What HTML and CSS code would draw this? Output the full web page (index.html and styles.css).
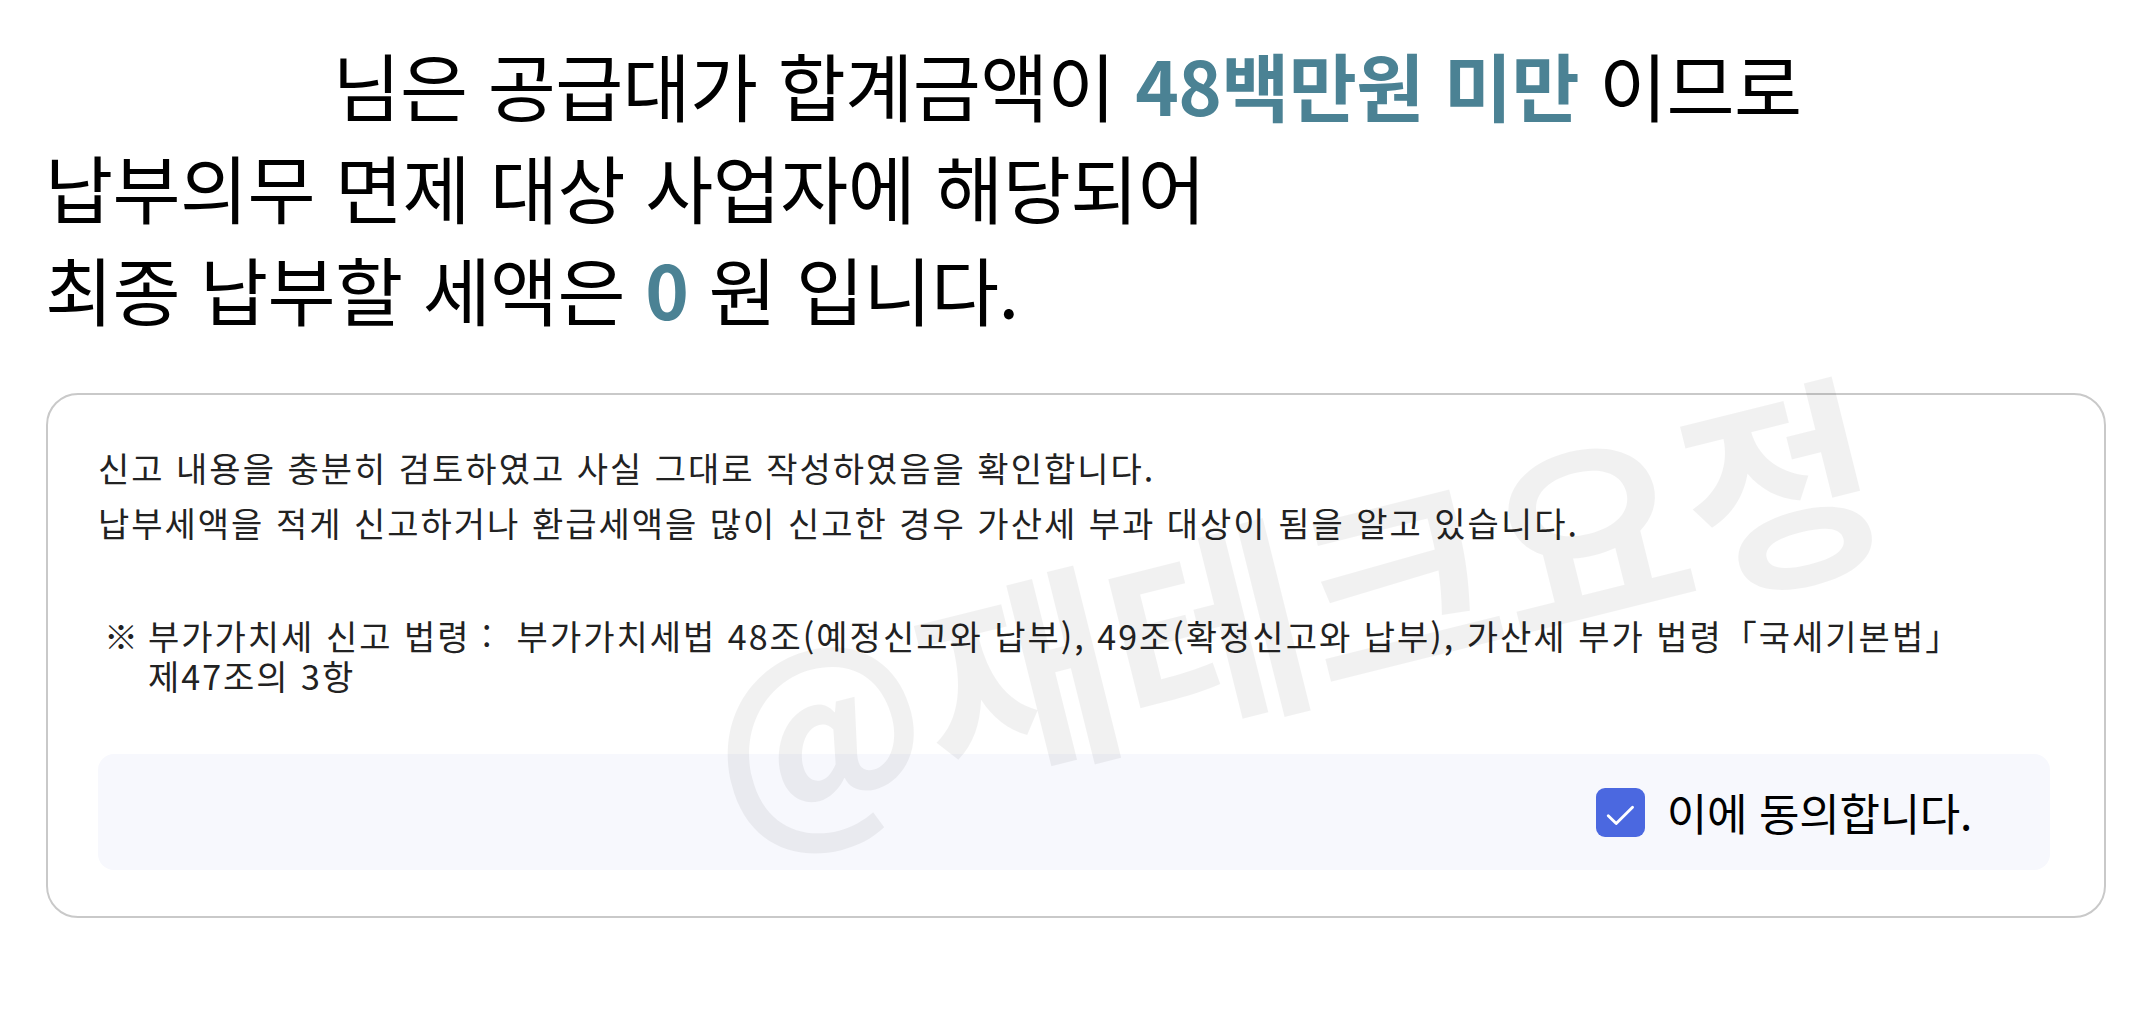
FILE: index.html
```html
<!DOCTYPE html>
<html lang="ko">
<head>
<meta charset="utf-8">
<title>신고 확인</title>
<link rel="stylesheet" href="styles.css">
</head>
<body>
<div class="page">
  <div class="headline">
    <div class="line line-center">님은 공급대가 합계금액이 <b class="hl">48백만원 미만</b> 이므로</div>
    <div class="line">납부의무 면제 대상 사업자에 해당되어</div>
    <div class="line">최종 납부할 세액은 <b class="hl">0</b> 원 입니다.</div>
  </div>

  <div class="card">
    <p class="stmt">신고 내용을 충분히 검토하였고 사실 그대로 작성하였음을 확인합니다.</p>
    <p class="stmt">납부세액을 적게 신고하거나 환급세액을 많이 신고한 경우 가산세 부과 대상이 됨을 알고 있습니다.</p>
    <div class="note">
      <span class="note-mark">※</span>
      <span class="note-text">부가가치세 신고 법령 :&nbsp; 부가가치세법 48조(예정신고와 납부), 49조(확정신고와 납부), 가산세 부가 법령「국세기본법」 제47조의 3항</span>
    </div>
    <div class="agree">
      <span class="checkbox">
        <svg viewBox="0 0 24 24" width="49" height="49" aria-hidden="true"><path d="M6 13.6 L9.9 17.4 L17.9 9.4" fill="none" stroke="#fff" stroke-width="1.4" stroke-linecap="round" stroke-linejoin="round"/></svg>
      </span>
      <span class="agree-text">이에 동의합니다.</span>
    </div>
  </div>

  <div class="watermark">@재테크요정</div>
</div>
</body>
</html>
```

FILE: styles.css
```css
html, body {
  margin: 0;
  padding: 0;
  background: #ffffff;
}

body {
  font-family: "Noto Sans CJK KR", "Noto Sans", sans-serif;
  color: #000;
}

.page {
  position: relative;
  width: 2134px;
  height: 1019px;
  overflow: hidden;
}

.headline {
  padding-top: 33px;
  font-size: 74px;
  line-height: 102px;
  font-weight: 400;
  letter-spacing: -0.6px;
  color: #000;
}

.line {
  padding-left: 45px;
  white-space: nowrap;
}

.line-center {
  padding-left: 0;
  text-align: center;
}

.hl {
  color: #4b8294;
  font-weight: 700;
}

.card {
  margin: 54px 28px 0 46px;
  border: 2px solid #c9c9c9;
  border-radius: 32px;
  padding: 45px 54px 46px 50px;
}

.stmt {
  margin: 0;
  font-size: 34px;
  line-height: 55px;
  color: #222;
  letter-spacing: 2px;
}

.note {
  display: flex;
  margin-top: 66px;
  font-size: 34px;
  line-height: 40px;
  color: #222;
  letter-spacing: 2px;
}

.note-mark {
  flex: 0 0 50px;
  padding-left: 6px;
  box-sizing: border-box;
}

.note-text {
  flex: 1;
  word-break: keep-all;
}

.agree {
  margin-top: 58px;
  height: 116px;
  background: #f7f8fd;
  border-radius: 16px;
  display: flex;
  align-items: center;
  justify-content: flex-end;
  gap: 22px;
  padding-right: 78px;
}

.checkbox {
  width: 49px;
  height: 49px;
  border-radius: 9px;
  background: #4b68e0;
  display: flex;
}

.agree-text {
  font-size: 44px;
  letter-spacing: -0.3px;
  color: #000;
}

.watermark {
  position: absolute;
  left: 1292px;
  top: 600px;
  transform: translate(-50%, -50%) rotate(-14deg);
  font-size: 214px;
  font-weight: 700;
  line-height: 1;
  color: rgba(0, 0, 0, 0.055);
  white-space: nowrap;
  pointer-events: none;
}
```
